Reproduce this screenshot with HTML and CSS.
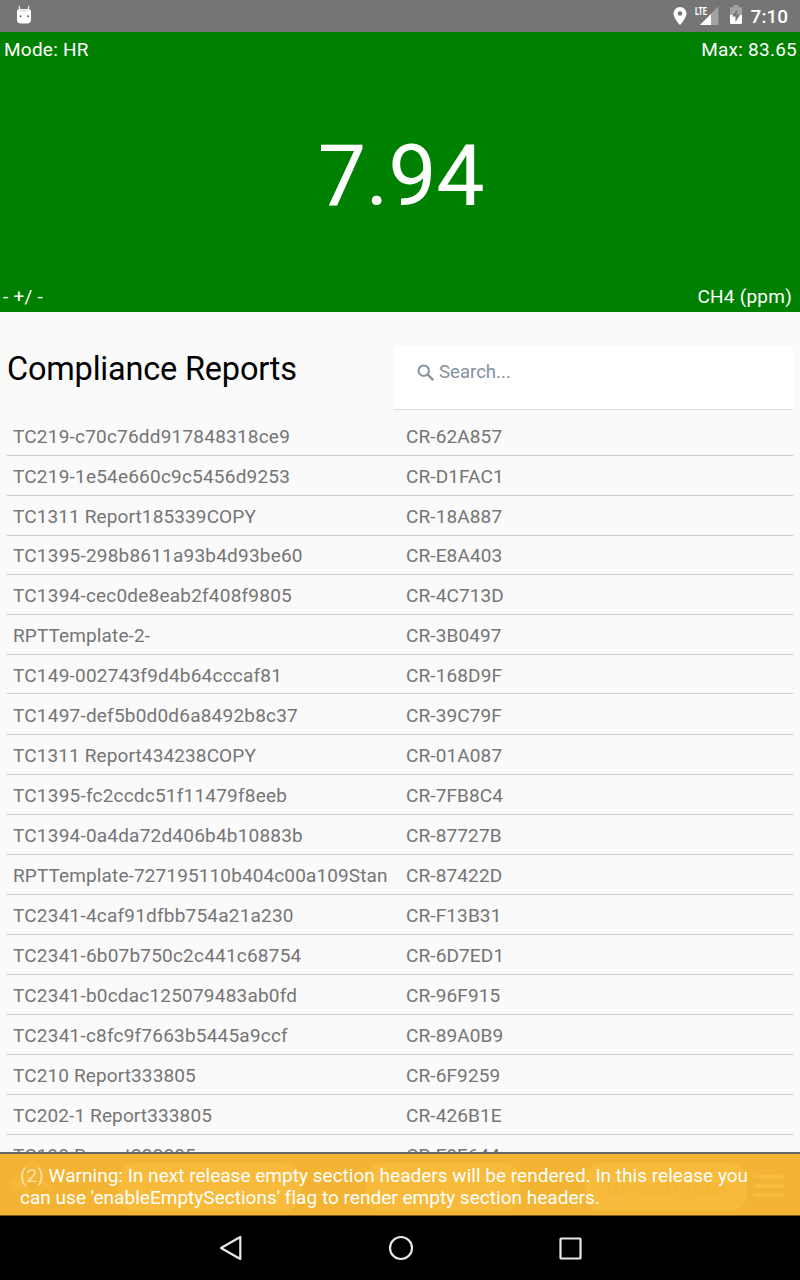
FILE: index.html
```html
<!DOCTYPE html>
<html lang="en">
<head>
<meta charset="utf-8">
<title>Compliance Reports</title>
<link rel="stylesheet" href="styles.css">
</head>
<body>
<div class="device">
  <header class="status">
    <svg class="bot" width="16" height="20" viewBox="0 0 16 20"><path d="M3 1l1 4M13 1l-1 4" stroke="#eee" stroke-width="1.2"/><path d="M1 6Q1 4 3.5 4h9Q15 4 15 6v8.500q0 4-4 4H5q-4 0-4-4z" fill="#fff"/><path d="M2 5.500Q8 3.500 14 5.500Q8 7.500 2 5.500z" fill="#ddd"/><circle cx="4.500" cy="11.300" r="1" fill="#666"/><circle cx="12" cy="11.300" r="1" fill="#666"/></svg>
    <div class="status-icons">
      <svg class="pin" width="14" height="20" viewBox="0 0 14 20"><path fill="#fff" fill-rule="evenodd" d="M7 1a6.500 6.500 0 0 0-6.500 6.500C.5 12.300 7 19 7 19s6.500-6.700 6.500-11.500A6.500 6.500 0 0 0 7 1zm0 4.200a2.300 2.300 0 1 1 0 4.600 2.300 2.300 0 0 1 0-4.600z"/></svg>
      <div class="signal">
        <svg width="24" height="20" viewBox="0 0 24 20"><path d="M23.300 1.500V20H5z" fill="#a3a3a3"/><path d="M16 8.900V20H5z" fill="#fff"/></svg>
        <span class="lte">LTE</span>
      </div>
      <svg class="battery" width="14" height="20" viewBox="0 0 14 20"><path d="M4.500 0h5v2.300h3.500V10H1V2.300h3.500z" fill="#a3a3a3"/><path d="M1 10h12v8q0 1-1 1H2q-1 0-1-1z" fill="#fff"/><path d="M8.500 4.500L3 11.500h3.500V17L11 9.800H7.500z" fill="#757575"/></svg>
      <span class="clock">7:10</span>
    </div>
  </header>

  <section class="reading">
    <div class="reading-row top"><span>Mode: HR</span><span>Max: 83.65</span></div>
    <div class="value">7.94</div>
    <div class="reading-row bottom"><span>- +/ -</span><span>CH4 (ppm)</span></div>
  </section>

  <main class="content">
    <div class="heading">
      <h1>Compliance Reports</h1>
      <div class="search">
        <svg width="18" height="18" viewBox="0 0 18 18" fill="none" stroke="#8492a0"><circle cx="6.700" cy="6.700" r="5.200" stroke-width="2"/><path d="M10.700 10.700l5.500 5.500" stroke-width="2.400"/></svg>
        <span>Search...</span>
      </div>
    </div>
    <div class="list">
      <div class="row"><span class="hash">TC219-c70c76dd917848318ce9</span><span>CR-62A857</span></div>
      <div class="row"><span class="hash">TC219-1e54e660c9c5456d9253</span><span>CR-D1FAC1</span></div>
      <div class="row"><span>TC1311 Report185339COPY</span><span>CR-18A887</span></div>
      <div class="row short"><span class="hash">TC1395-298b8611a93b4d93be60</span><span>CR-E8A403</span></div>
      <div class="row"><span class="hash">TC1394-cec0de8eab2f408f9805</span><span>CR-4C713D</span></div>
      <div class="row"><span>RPTTemplate-2-</span><span>CR-3B0497</span></div>
      <div class="row snug"><span class="hash">TC149-002743f9d4b64cccaf81</span><span>CR-168D9F</span></div>
      <div class="row tall"><span class="hash">TC1497-def5b0d0d6a8492b8c37</span><span>CR-39C79F</span></div>
      <div class="row"><span>TC1311 Report434238COPY</span><span>CR-01A087</span></div>
      <div class="row"><span class="hash">TC1395-fc2ccdc51f11479f8eeb</span><span>CR-7FB8C4</span></div>
      <div class="row"><span class="hash">TC1394-0a4da72d406b4b10883b</span><span>CR-87727B</span></div>
      <div class="row"><span>RPTTemplate-727195110b404c00a109Stan</span><span>CR-87422D</span></div>
      <div class="row"><span class="hash">TC2341-4caf91dfbb754a21a230</span><span>CR-F13B31</span></div>
      <div class="row"><span class="hash">TC2341-6b07b750c2c441c68754</span><span>CR-6D7ED1</span></div>
      <div class="row"><span class="hash">TC2341-b0cdac125079483ab0fd</span><span>CR-96F915</span></div>
      <div class="row"><span class="hash">TC2341-c8fc9f7663b5445a9ccf</span><span>CR-89A0B9</span></div>
      <div class="row"><span>TC210 Report333805</span><span>CR-6F9259</span></div>
      <div class="row"><span>TC202-1 Report333805</span><span>CR-426B1E</span></div>
      <div class="row"><span>TC198 Report333805</span><span>CR-F8F644</span></div>
    </div>
  </main>

  <footer class="toolbar">
    <svg class="mute" width="44" height="30" viewBox="0 0 44 30"><path d="M1 10h9L19 3v24l-9-7H1z" fill="#f5b838"/><path d="M29 10l13 11M42 10L29 21" stroke="#f5b838" stroke-width="3.500"/></svg>
    <div class="pill pill-a"></div>
    <div class="pill pill-b"></div>
    <div class="pill pill-c">Investigate</div>
    <div class="menu"><i></i><i></i><i></i></div>
    <p class="warning"><span class="count">(2)</span> Warning: In next release empty section headers will be rendered. In this release you can use 'enableEmptySections' flag to render empty section headers.</p>
  </footer>

  <nav class="nav">
    <svg width="24" height="28" viewBox="0 0 24 28"><path d="M21.300 3v22L2 14z"/></svg>
    <svg width="28" height="28" viewBox="0 0 28 28"><circle cx="14" cy="14" r="11"/></svg>
    <svg width="24" height="28" viewBox="0 0 24 28"><rect x="2.500" y="4.500" width="20" height="20" rx=".5"/></svg>
  </nav>
</div>
</body>
</html>
```
FILE: styles.css
```css
* { box-sizing: border-box; }
body { margin: 0; font-family: Roboto, sans-serif; }
.device { width: 800px; height: 1280px; display: flex; flex-direction: column; background: #fafafa; overflow: hidden; }

.status { height: 32px; background: #757575; display: flex; justify-content: space-between; padding: 5px 12px 0 16px; }
.status-icons { display: flex; color: #fff; }
.pin { margin-right: 8px; margin-top: 1px; }
.signal { position: relative; width: 24px; height: 20px; margin-right: 10px; }
.lte { position: absolute; left: 0; top: 1px; font-size: 11px; line-height: 11px; font-weight: 700; transform: scaleX(.68); transform-origin: left; }
.battery { margin-right: 8px; }
.clock { font-size: 19px; line-height: 23px; font-weight: 500; }

.reading { height: 280px; background: #008000; color: #fff; display: flex; flex-direction: column; justify-content: space-between; }
.reading-row { display: flex; justify-content: space-between; font-size: 19px; letter-spacing: .24px; line-height: 22px; }
.top { padding: 7px 3px 0 4px; }
.bottom { padding: 0 8px 4px 3px; }
.value { text-align: center; font-size: 86px; line-height: 104px; letter-spacing: -.3px; padding: 5px 0 0 2px; }

.content { height: 840px; padding: 34px 7px 0; overflow: hidden; }
.heading { display: flex; justify-content: space-between; height: 70px; }
h1 { margin: 4px 0 0; font-weight: 400; font-size: 32.500px; letter-spacing: -.2px; line-height: 38px; color: #000; }
.search { width: 399px; height: 64px; background: #fff; border-bottom: 1px solid #ddd; padding: 15px 0 0 23px; display: flex; gap: 4px; color: #8492a0; font-size: 18.600px; line-height: 22px; }
.search svg { margin-top: 3px; }
.row { height: 40px; border-bottom: 1px solid #ccc; display: grid; grid-template-columns: 393px 1fr; padding: 10px 0 0 6px; font-size: 19px; letter-spacing: .12px; line-height: 22px; color: #757575; white-space: nowrap; }
.row.short { height: 39px; padding-top: 9px; }
.row.snug { height: 39px; }
.row.tall { height: 41px; padding-top: 11px; }
.hash { letter-spacing: .21px; }

.toolbar { position: relative; height: 64px; background: #f2b432; border-top: 2px solid #666; border-bottom: 1px solid #7b5b19; display: flex; }
.mute { margin: 16px 0 0 10px; }
.pill { height: 48px; margin-top: 9px; border-radius: 16px; background: #f7ba3a; color: #f5b736; text-align: center; font-size: 24px; font-weight: 700; line-height: 50px; }
.pill-a { width: 183px; margin-left: 64px; }
.pill-b { width: 154px; margin-left: 65px; }
.pill-c { width: 162px; margin-left: 65px; }
.menu { margin: 21px 0 0 6px; display: grid; grid-auto-rows: 4px; gap: 5px; width: 31px; }
.menu i { background: #f7bb3d; border-radius: 2px; }
.warning { position: absolute; left: 20px; top: 11px; width: 735px; margin: 0; color: #fff; font-size: 19px; letter-spacing: .02px; line-height: 22px; }
.count { opacity: .6; }

.nav { height: 64px; background: #000; display: flex; justify-content: space-between; padding: 18px 218px 0 219px; }
.nav svg { fill: none; stroke: #e8e8e8; stroke-width: 2.200; stroke-linejoin: round; }
```
